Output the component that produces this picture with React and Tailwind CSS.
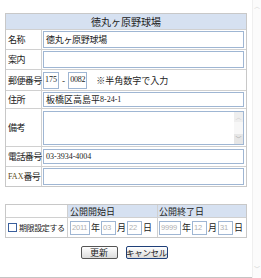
import React from "react";

const jp = { fontFamily: '"Noto Sans CJK JP", "Noto Sans", sans-serif' };
const serif = { fontFamily: '"Liberation Serif", "Noto Sans CJK JP", serif' };
const sans = { fontFamily: '"Liberation Sans", Arial, sans-serif' };

function Field({ children, className = "" }) {
  return (
    <div
      className={
        "flex items-center overflow-hidden whitespace-nowrap border border-[#9fb6d3] bg-white text-[8px] leading-none text-[#222] " +
        className
      }
      style={serif}
    >
      {children}
    </div>
  );
}

function Label({ children }) {
  return (
    <div
      className="flex items-center whitespace-nowrap border-r border-[#d0d0d0] pl-[2px] text-[9px] leading-none tracking-[-0.6px] text-[#222]"
      style={jp}
    >
      {children}
    </div>
  );
}

function Row({ label, children, h }) {
  return (
    <div className={"grid grid-cols-[36px_1fr] border-t border-[#d0d0d0] " + h}>
      <Label>{label}</Label>
      <div className="flex items-center pl-[1px] pr-[2px]">{children}</div>
    </div>
  );
}

function Ph({ children, w }) {
  return (
    <div
      className={
        "flex h-[14px] shrink-0 items-center overflow-hidden whitespace-nowrap border border-[#9fb6d3] bg-white pl-[1px] text-[7.5px] leading-none tracking-[-0.2px] text-[#b0b0b0] " +
        w
      }
      style={sans}
    >
      {children}
    </div>
  );
}

function Unit({ children }) {
  return (
    <span className="px-[1px] text-[9px] leading-none text-[#222]" style={jp}>
      {children}
    </span>
  );
}

export default function App() {
  return (
    <div className="flex h-[278px] w-[261px] overflow-hidden bg-white" style={jp}>
      <div className="flex w-[252px] flex-col border-b border-[#c4c4c4]">
        <div className="px-[5px] pt-[13px]">
          {/* main table */}
          <div className="flex flex-col border border-[#c8c8c8]">
            <div className="flex h-[15px] items-center justify-center bg-[#d6e1f1] text-[10px] leading-none text-[#222]">
              徳丸ヶ原野球場
            </div>
            <Row label="名称" h="h-[20px]">
              <Field className="h-[17px] w-full px-[2px]">
                <span className="text-[9px] tracking-[-0.3px]" style={jp}>徳丸ヶ原野球場</span>
              </Field>
            </Row>
            <Row label="案内" h="h-[20px]">
              <Field className="h-[17px] w-full" />
            </Row>
            <Row label="郵便番号" h="h-[21px]">
              <Field className="h-[17px] w-[16px] shrink-0 pl-[1px]">175</Field>
              <span className="px-[3px] text-[9px] leading-none text-[#222]">-</span>
              <Field className="h-[17px] w-[19px] shrink-0 pl-[1px] tracking-[-0.2px]">0082</Field>
              <span className="ml-[9px] whitespace-nowrap text-[9px] leading-none text-[#222]">※半角数字で入力</span>
            </Row>
            <Row label="住所" h="h-[18px]">
              <Field className="h-[15px] w-full px-[2px]">
                <span className="text-[9px]" style={jp}>板橋区高島平</span>
                <span>8-24-1</span>
              </Field>
            </Row>
            <Row label="備考" h="h-[38px]">
              <div className="relative h-[34px] w-full border border-[#9fb6d3] bg-white">
                <div className="absolute right-0 top-0 flex h-full w-[9px] flex-col justify-between bg-[#f7f7f7]">
                  <div className="flex h-[10px] items-center justify-center bg-[#eeeeee] text-[6px] leading-none text-[#c8c8c8]">
                    ︿
                  </div>
                  <div className="flex h-[10px] items-center justify-center bg-[#e6e6e6] text-[6px] leading-none text-[#aaaaaa]">
                    ﹀
                  </div>
                </div>
              </div>
            </Row>
            <Row label="電話番号" h="h-[20px]">
              <Field className="h-[15px] w-full px-[2px]">03-3934-4004</Field>
            </Row>
            <Row
              label={
                <>
                  <span style={serif} className="text-[8px] tracking-[0px] text-[#5a4a20]">FAX</span>
                  <span>番号</span>
                </>
              }
              h="h-[20px]"
            >
              <Field className="h-[17px] w-full" />
            </Row>
          </div>

          {/* period table */}
          <div className="mt-[17px] flex flex-col border border-[#c8c8c8]">
            <div className="grid h-[12px] grid-cols-[62px_89px_1fr]">
              <div className="border-r border-[#d0d0d0]" />
              <div className="flex items-center bg-[#d6e1f1] pl-[2px] text-[9px] leading-none text-[#222]">
                公開開始日
              </div>
              <div className="flex items-center border-l border-[#d0d0d0] bg-[#d6e1f1] pl-[1px] text-[9px] leading-none text-[#222]">
                公開終了日
              </div>
            </div>
            <div className="grid h-[20px] grid-cols-[62px_89px_1fr] border-t border-[#d0d0d0]">
              <div className="flex items-center whitespace-nowrap border-r border-[#d0d0d0] pl-[2px]">
                <div className="h-[9px] w-[9px] shrink-0 border border-[#3a5f9c] bg-white" />
                <span className="ml-[2px] text-[8px] leading-none tracking-[-0.4px] text-[#222]">期限設定する</span>
              </div>
              <div className="flex items-center whitespace-nowrap pl-[2px]">
                <Ph w="w-[20px]">2011</Ph>
                <Unit>年</Unit>
                <Ph w="w-[15px]">03</Ph>
                <Unit>月</Unit>
                <Ph w="w-[15px]">22</Ph>
                <Unit>日</Unit>
              </div>
              <div className="flex items-center whitespace-nowrap border-l border-[#d0d0d0] pl-[1px]">
                <Ph w="w-[22px]">9999</Ph>
                <Unit>年</Unit>
                <Ph w="w-[15px]">12</Ph>
                <Unit>月</Unit>
                <Ph w="w-[15px]">31</Ph>
                <Unit>日</Unit>
              </div>
            </div>
          </div>

          {/* buttons */}
          <div className="mt-[8px] flex justify-center gap-[8px] pr-[4px]">
            <button className="flex h-[13px] w-[37px] items-center justify-center whitespace-nowrap rounded-[2px] border border-[#555] bg-gradient-to-b from-white to-[#dcdcdc] text-[9px] leading-none text-[#222]">
              更新
            </button>
            <button className="flex h-[13px] w-[42px] items-center justify-center whitespace-nowrap rounded-[2px] border border-[#1f3f78] bg-gradient-to-b from-white to-[#dcdcdc] text-[8.5px] leading-none tracking-[-0.3px] text-[#222]">
              キャンセル
            </button>
          </div>
        </div>
      </div>
      {/* page scrollbar */}
      <div className="flex w-[9px] flex-col justify-between border-l border-[#efefef] bg-[#fbfbfb] py-[1px]">
        <div className="flex h-[10px] items-center justify-center text-[6px] leading-none text-[#d0d0d0]">︿</div>
        <div className="mb-[3px] flex h-[10px] items-center justify-center text-[6px] leading-none text-[#d0d0d0]">﹀</div>
      </div>
    </div>
  );
}
